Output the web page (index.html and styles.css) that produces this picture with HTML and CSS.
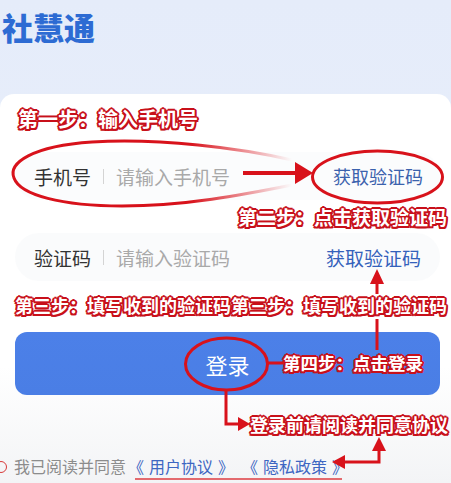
FILE: index.html
```html
<!DOCTYPE html>
<html lang="zh-CN">
<head>
<meta charset="utf-8">
<title>社慧通</title>
<link rel="stylesheet" href="styles.css">
</head>
<body>
<div class="page">
  <header class="header">
    <h1 class="title">社慧通</h1>
  </header>
  <main class="card">
    <div class="note note-step1">第一步：输入手机号</div>
    <div class="field field-phone">
      <span class="field-label">手机号</span>
      <span class="field-divider"></span>
      <span class="field-placeholder">请输入手机号</span>
      <span class="field-action action-1">获取验证码</span>
    </div>
    <div class="note-row note-row-step2"><span class="note note-step2">第二步：点击获取验证码</span></div>
    <div class="field field-code">
      <span class="field-label">验证码</span>
      <span class="field-divider"></span>
      <span class="field-placeholder">请输入验证码</span>
      <span class="field-action action-2">获取验证码</span>
    </div>
    <div class="note note-step3">第三步：填写收到的验证码第三步：填写收到的验证码</div>
    <div class="login-btn">
      <span class="login-text">登录</span>
      <span class="note note-step4">第四步：点击登录</span>
    </div>
    <div class="note-row note-row-step5"><span class="note note-step5">登录前请阅读并同意协议</span></div>
    <div class="agree">
      <span class="agree-circle"></span>
      <span class="agree-text">我已阅读并同意</span>
      <span class="agree-link"><span class="br-open">《</span>用户协议<span class="br-close">》</span></span>
      <span class="agree-link agree-link-2"><span class="br-open">《</span>隐私政策<span class="br-close">》</span></span>
    </div>
  </main>
  <svg class="overlay" width="451" height="483" viewBox="0 0 451 483">
    <defs>
      <linearGradient id="fade" gradientUnits="userSpaceOnUse" x1="190" y1="0" x2="292" y2="0">
        <stop offset="0" stop-color="#d8121b" stop-opacity="1"/>
        <stop offset="1" stop-color="#d8121b" stop-opacity="0"/>
      </linearGradient>
    </defs>
    <path d="M292 160 C240 148 160 138 92 142 C32 146 8 163 14 178 C20 195 62 206 122 206 C185 206 242 195 292 185" fill="none" stroke="url(#fade)" stroke-width="3"/>
    <line x1="243" y1="173" x2="299" y2="173" stroke="#d8121b" stroke-width="4"/>
    <polygon points="295,162 313,173 295,184" fill="#d8121b"/>
    <ellipse cx="377.5" cy="177" rx="65" ry="26" fill="none" stroke="#d8121b" stroke-width="3"/>
    <polygon points="370,284 377,269 384,284" fill="#d8121b"/>
    <line x1="377" y1="283" x2="377" y2="294" stroke="#d8121b" stroke-width="3"/>
    <line x1="377" y1="319" x2="377" y2="350" stroke="#d8121b" stroke-width="3"/>
    <ellipse cx="226.5" cy="364" rx="41" ry="26" fill="none" stroke="#d8121b" stroke-width="3"/>
    <line x1="267" y1="363" x2="284" y2="363" stroke="#d8121b" stroke-width="3"/>
    <polyline points="226,390 226,424 240,424" fill="none" stroke="#d8121b" stroke-width="3"/>
    <polygon points="238,417 250,424 238,431" fill="#d8121b"/>
    <polygon points="332,462 345,455 345,469" fill="#d8121b"/>
    <polyline points="344,462 379,462 379,449" fill="none" stroke="#d8121b" stroke-width="3"/>
    <polygon points="372,451 379,437 386,451" fill="#d8121b"/>
    <line x1="135" y1="479" x2="342" y2="479" stroke="#e36a6e" stroke-width="2"/>
  </svg>
</div>
</body>
</html>
```
FILE: styles.css
```css
html, body {
  margin: 0;
  padding: 0;
}
body {
  width: 451px;
  height: 483px;
  overflow: hidden;
  font-family: "Noto Sans CJK SC", "Noto Sans", sans-serif;
  background: linear-gradient(180deg, #e5ecfa 0%, #eaf0fb 100%);
}
.page {
  position: relative;
  width: 451px;
  height: 483px;
  display: flex;
  flex-direction: column;
}
.header {
  height: 94px;
  flex: none;
  padding: 10px 0 0 2px;
  box-sizing: border-box;
}
.title {
  margin: 0;
  font-size: 31px;
  line-height: 34px;
  font-weight: 900;
  color: #2d6bd3;
}
.card {
  flex: 1;
  background: linear-gradient(180deg, #ffffff 0%, #ffffff 70%, #f3f4f6 100%);
  border-radius: 14px 14px 0 0;
  padding-top: 12px;
  display: flex;
  flex-direction: column;
}
.note {
  color: #ffffff;
  font-weight: 700;
  white-space: nowrap;
  text-shadow:
    2px 0 0 #c8101a, -2px 0 0 #c8101a, 0 2px 0 #c8101a, 0 -2px 0 #c8101a,
    1.5px 1.5px 0 #c8101a, -1.5px -1.5px 0 #c8101a, 1.5px -1.5px 0 #c8101a, -1.5px 1.5px 0 #c8101a,
    1px 0 1px #c8101a, -1px 0 1px #c8101a;
}
.note-step1 {
  font-size: 20px;
  line-height: 26px;
  padding-left: 18px;
}
.note-row {
  display: flex;
  justify-content: flex-end;
}
.note-row-step2 {
  margin-top: 5px;
  padding-right: 4px;
}
.note-step2 {
  font-size: 19px;
  line-height: 24px;
}
.note-step3 {
  margin-top: 12px;
  font-size: 18px;
  line-height: 24px;
  padding-left: 15px;
}
.note-row-step5 {
  margin-top: 17px;
  padding-right: 3px;
}
.note-step5 {
  font-size: 18px;
  line-height: 24px;
}
.field {
  height: 48px;
  margin: 0 11px 0 15px;
  padding: 0 0 0 19px;
  border-radius: 24px;
  display: flex;
  align-items: center;
}
.field-phone {
  margin-top: 20px;
  background: rgba(246, 248, 250, 0.4);
}
.field-code {
  margin-top: 4px;
  background: rgba(244, 246, 249, 0.45);
}
.field-label {
  font-size: 19px;
  color: #333333;
}
.field-divider {
  width: 1px;
  height: 15px;
  background: #d4d4d4;
  margin: 0 12px;
}
.field-placeholder {
  font-size: 19px;
  color: #a9a9a9;
}
.field-action {
  margin-left: auto;
  color: #3b62ad;
}
.action-1 {
  font-size: 18px;
  padding-right: 17px;
}
.action-2 {
  font-size: 19px;
  padding-right: 19px;
  color: #3461bb;
}
.login-btn {
  position: relative;
  margin: 15px 11px 0 15px;
  height: 63px;
  border-radius: 12px;
  background: linear-gradient(180deg, #4c80e8 0%, #4a7ee5 100%);
  display: flex;
  align-items: center;
  justify-content: center;
}
.login-text {
  color: #ffffff;
  font-size: 22px;
}
.note-step4 {
  position: absolute;
  left: 268px;
  top: 19px;
  font-size: 17.5px;
  line-height: 24px;
}
.agree {
  margin-top: 19px;
  display: flex;
  align-items: center;
  height: 22px;
}
.agree-circle {
  width: 10px;
  height: 10px;
  border: 1.6px solid #d83a3a;
  border-radius: 50%;
  margin-left: -5px;
  margin-top: 2px;
  flex: none;
}
.agree-text {
  margin-left: 7px;
  font-size: 16px;
  color: #8c8c8c;
}
.agree-link {
  margin-left: 2px;
  font-size: 16px;
  color: #3d66c2;
}
.agree-link-2 {
  margin-left: 8px;
}
.br-open {
  margin-right: 5px;
}
.br-close {
  margin-left: 5px;
}
.overlay {
  position: absolute;
  left: 0;
  top: 0;
  pointer-events: none;
}
```
